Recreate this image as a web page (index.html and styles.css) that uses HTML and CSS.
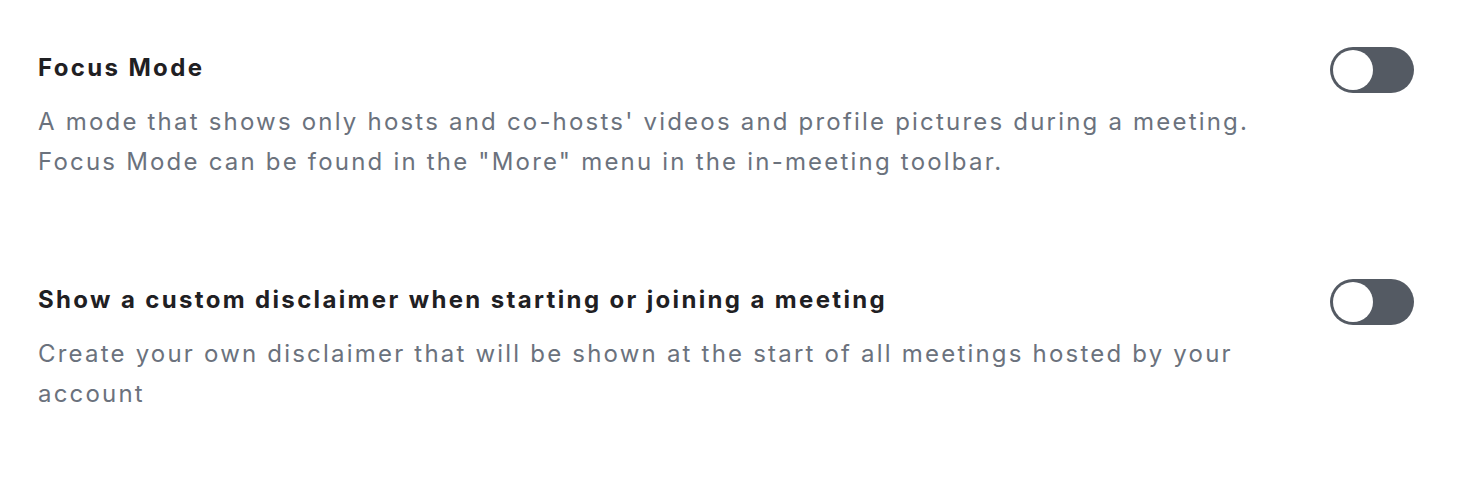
FILE: index.html
```html
<!DOCTYPE html>
<html lang="en">
<head>
<meta charset="utf-8">
<title>Settings</title>
<link rel="stylesheet" href="styles.css">
</head>
<body>
<div class="settings">
  <div class="setting-row">
    <div class="setting-text">
      <div class="setting-title">Focus Mode</div>
      <div class="setting-desc">A mode that shows only hosts and co-hosts' videos and profile pictures during a meeting. Focus Mode can be found in the "More" menu in the in-meeting toolbar.</div>
    </div>
    <div class="toggle"><span class="knob"></span></div>
  </div>
  <div class="setting-row">
    <div class="setting-text">
      <div class="setting-title">Show a custom disclaimer when starting or joining a meeting</div>
      <div class="setting-desc">Create your own disclaimer that will be shown at the start of all meetings hosted by your account</div>
    </div>
    <div class="toggle"><span class="knob"></span></div>
  </div>
</div>
</body>
</html>
```

FILE: styles.css
```css
html, body {
  margin: 0;
  padding: 0;
  background: #ffffff;
}
body {
  font-family: Inter, "Noto Sans", "Liberation Sans", sans-serif;
  -webkit-font-smoothing: antialiased;
}
.settings {
  display: flex;
  flex-direction: column;
  gap: 102px;
  padding: 52px 62px 0 38px;
}
.setting-row {
  display: flex;
  justify-content: space-between;
  align-items: flex-start;
  gap: 40px;
}
.setting-text {
  flex: 1;
  max-width: 1252px;
}
.setting-title {
  font-size: 24px;
  line-height: 32px;
  font-weight: 700;
  letter-spacing: 2.35px;
  color: #1f2023;
  margin-bottom: 18px;
}
.setting-desc {
  font-size: 24px;
  line-height: 40px;
  font-weight: 400;
  letter-spacing: 2.2px;
  color: #6b727d;
}
.toggle {
  flex: none;
  width: 84px;
  height: 46px;
  margin-top: -5px;
  border-radius: 23px;
  background: #545a63;
  display: flex;
  align-items: center;
  padding: 0 3px;
  box-sizing: border-box;
}
.knob {
  width: 40px;
  height: 40px;
  border-radius: 50%;
  background: #ffffff;
}
```
